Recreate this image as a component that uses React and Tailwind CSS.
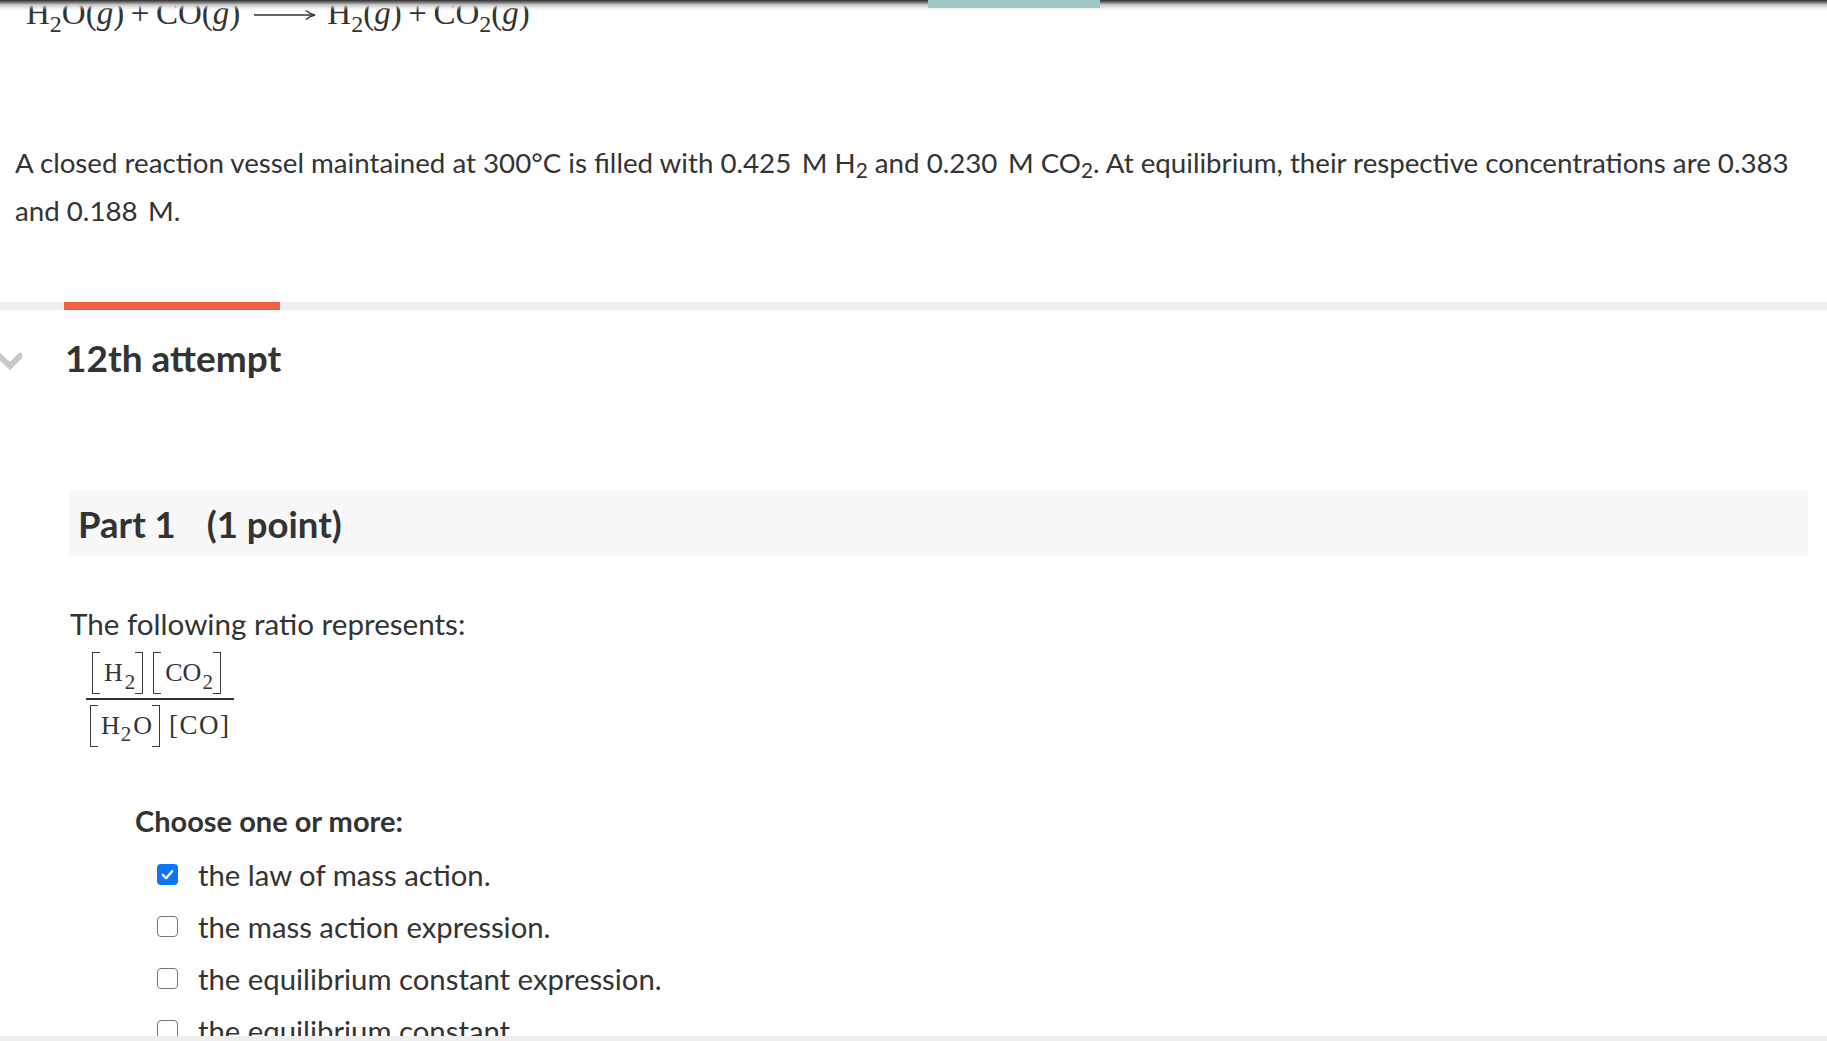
import React from "react";

const serif = { fontFamily: '"Liberation Serif", "Times New Roman", serif' };

function TallBracket({ side, h = 42 }) {
  return (
    <span
      className={
        "inline-block w-[8px] shrink-0 border-y-[1.5px] border-[#3a3a3a] " +
        (side === "l" ? "border-l-[1.7px]" : "border-r-[1.7px]")
      }
      style={{ height: h }}
    />
  );
}

function Sub({ children, size = 21, top = 9, ml = 2 }) {
  return (
    <span className="relative leading-none" style={{ fontSize: size, top, marginLeft: ml }}>
      {children}
    </span>
  );
}

function Checkbox({ checked }) {
  if (checked) {
    return (
      <span className="flex h-[21px] w-[21px] shrink-0 items-center justify-center rounded-[4px] bg-[#0b75f5]">
        <svg width="15" height="15" viewBox="0 0 16 16">
          <polyline points="3,8.5 6.5,12 13,4.5" fill="none" stroke="#fff" strokeWidth="2.6" strokeLinecap="round" strokeLinejoin="round" />
        </svg>
      </span>
    );
  }
  return <span className="h-[21px] w-[21px] shrink-0 rounded-[4px] border-[1.5px] border-[#767676] bg-white" />;
}

export default function App() {
  const items = [
    ["the law of mass action.", true],
    ["the mass action expression.", false],
    ["the equilibrium constant expression.", false],
    ["the equilibrium constant.", false],
  ];
  return (
    <div
      className="relative h-[1041px] w-full overflow-hidden bg-white text-[#333333]"
      style={{ fontFamily: 'Lato, "Noto Sans", sans-serif' }}
    >
      {/* header shadow overlay */}
      <div className="pointer-events-none absolute left-0 right-0 top-0 z-10 h-[10px] bg-gradient-to-b from-[#2e2e2e] via-[#cfcfcf] to-transparent" />
      <div className="absolute left-[928px] top-0 z-20 h-[8px] w-[172px] bg-[#9ec6c6]" />
      <div className="pointer-events-none absolute bottom-0 left-0 right-0 z-10 h-[5px] bg-[#eeeeee]" />

      {/* equation */}
      <div className="-mt-[2px] flex h-[30px] items-baseline pl-[26px] text-[33px] leading-[30px] text-[#333]" style={serif}>
        <span>
          H<Sub size={24} top={8} ml={0}>2</Sub>O(<i>g</i>)&thinsp;+&thinsp;CO(<i>g</i>)
        </span>
        <span className="ml-[14px] mr-[11px] inline-flex self-center">
          <svg width="62" height="14" viewBox="0 0 62 14">
            <line x1="0" y1="9" x2="59" y2="9" stroke="#333" strokeWidth="1.4" />
            <path d="M52 4.5 Q56 8 61 9 Q56 10 52 13.5" fill="none" stroke="#333" strokeWidth="1.4" />
          </svg>
        </span>
        <span>
          H<Sub size={24} top={8} ml={0}>2</Sub>(<i>g</i>)&thinsp;+&thinsp;CO<Sub size={24} top={8} ml={0}>2</Sub>(<i>g</i>)
        </span>
      </div>

      {/* paragraph */}
      <p className="mt-[111px] pl-[15px] pr-[15px] text-[27.7px] leading-[48px]">
        A closed reaction vessel maintained at 300°C is filled with 0.425&nbsp;&thinsp;M H<sub>2</sub> and 0.230&nbsp;&thinsp;M CO<sub>2</sub>. At equilibrium, their respective concentrations are 0.383 and 0.188&nbsp;&thinsp;M.
      </p>

      {/* tab bar */}
      <div className="mt-[67px] flex h-[8px] w-full bg-[#eeeeee]">
        <div className="ml-[64px] h-full w-[216px] bg-[#ef6341]" />
      </div>

      {/* attempt heading */}
      <div className="mt-[26px] flex h-[44px] items-center">
        <svg width="22" height="20" viewBox="0 0 22 20" className="mt-[6px] shrink-0">
          <polyline points="-3,3 10,15 22,3" fill="none" stroke="#c8c8c8" strokeWidth="6" />
        </svg>
        <h2 className="ml-[43px] text-[37px] font-bold leading-[44px] text-[#333]">12th attempt</h2>
      </div>

      {/* part box */}
      <div className="ml-[69px] mr-[19px] mt-[111px] h-[65px] bg-[#f8f8f8] pl-[9px] pt-[11px]">
        <h3 className="text-[36.5px] font-bold leading-[44px] text-[#333]">
          Part 1<span className="inline-block w-[31px]" />(1 point)
        </h3>
      </div>

      {/* question */}
      <div className="ml-[70px] mt-[50px] text-[29.6px] leading-[36px]">The following ratio represents:</div>

      {/* fraction */}
      <div className="ml-[86px] mt-[10px] flex w-[148px] flex-col text-[26px] text-[#333]" style={serif}>
        <div className="flex items-center pb-[4px] pl-[6px]">
          <TallBracket side="l" />
          <span className="ml-[4px] leading-none">H</span>
          <Sub>2</Sub>
          <TallBracket side="r" />
          <span className="w-[10px] shrink-0" />
          <TallBracket side="l" />
          <span className="ml-[4px] leading-none">CO</span>
          <Sub ml={1}>2</Sub>
          <TallBracket side="r" />
        </div>
        <div className="h-[1.5px] w-[148px] bg-[#333]" />
        <div className="flex items-center pl-[4px] pt-[5px]">
          <TallBracket side="l" />
          <span className="ml-[3px] leading-none">H</span>
          <Sub ml={1}>2</Sub>
          <span className="ml-[2px] leading-none">O</span>
          <TallBracket side="r" />
          <span className="ml-[9px] text-[27px] leading-none tracking-[1.5px]">[CO]</span>
        </div>
      </div>

      {/* choices */}
      <div className="ml-[135px] mt-[57px] text-[29px] font-bold leading-[34px] text-[#333]">Choose one or more:</div>
      <div className="ml-[157px] mt-[19px] flex flex-col gap-[16px]">
        {items.map(([label, checked]) => (
          <label key={label} className="flex h-[36px] items-center gap-[20px] text-[29.3px] leading-[36px]">
            <Checkbox checked={checked} />
            <span>{label}</span>
          </label>
        ))}
      </div>
    </div>
  );
}
